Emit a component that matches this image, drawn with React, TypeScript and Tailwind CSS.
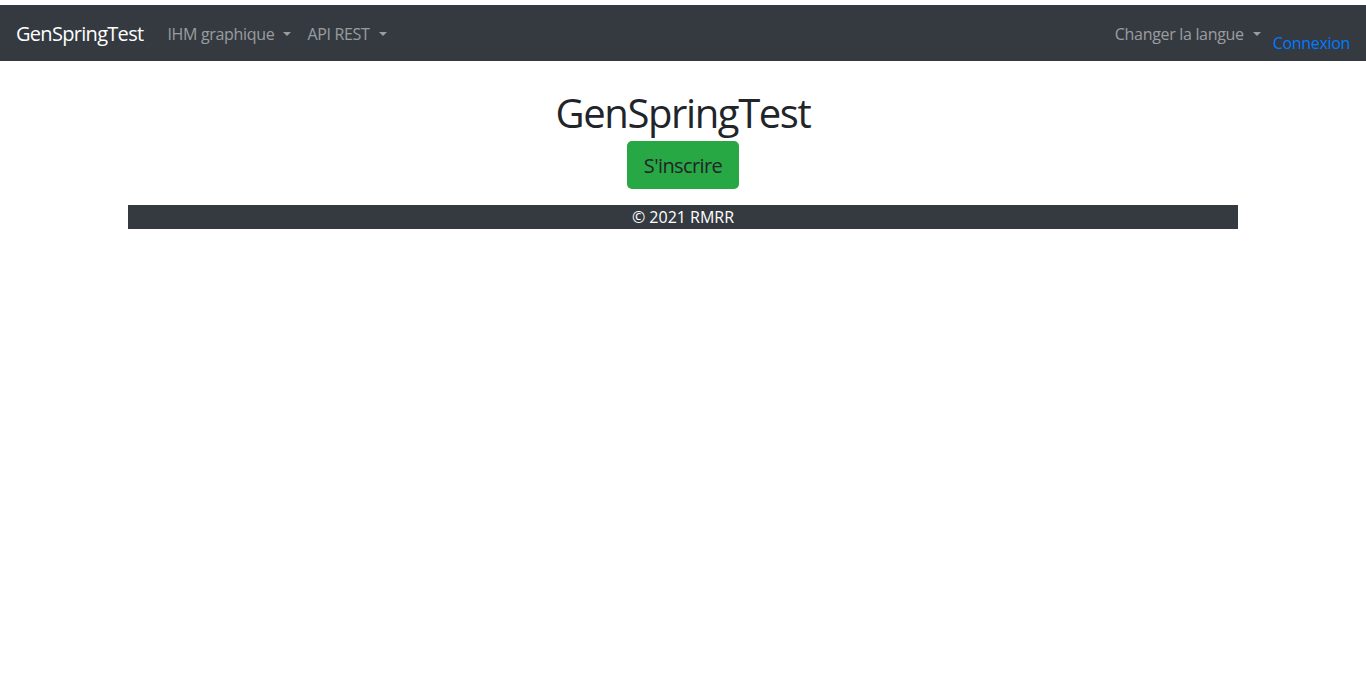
import { ReactNode } from "react";

function Caret() {
  return (
    <span className="ml-[9px] inline-block align-[4px] border-x-4 border-t-4 border-x-transparent border-t-current" />
  );
}

function NavLink({ children }: { children: ReactNode }) {
  return (
    <a href="#" className="px-2 pt-[9px] pb-[7px] leading-6 tracking-[-0.02em] text-[rgba(255,255,255,0.5)]">
      {children}
      <Caret />
    </a>
  );
}

export default function App() {
  return (
    <div className="min-h-screen bg-white pt-[5px] font-['Open_Sans',sans-serif] text-base text-[#212529]">
      <nav className="flex items-center justify-between bg-[#343a40] px-4 py-2">
        <div className="flex items-center">
          <a href="#" className="mr-4 pt-[6px] pb-[4px] text-xl leading-[30px] tracking-[-0.035em] text-white">
            GenSpringTest
          </a>
          <NavLink>IHM graphique</NavLink>
          <NavLink>API REST</NavLink>
        </div>
        <div className="flex items-center">
          <NavLink>Changer la langue</NavLink>
          <a href="#" className="ml-1 -mb-[2px] pt-[18px] leading-6 tracking-[-0.02em] text-[#007bff]">
            Connexion
          </a>
        </div>
      </nav>

      <main className="mx-auto w-[1110px]">
        <div className="flex flex-col items-center pt-7">
          <h1 className="text-[40px] leading-[48px] font-normal tracking-[-0.035em]">GenSpringTest</h1>
          <button className="mt-1 rounded-[5px] bg-[#28a745] px-[17px] pt-[10px] pb-[8px] text-xl leading-[30px] tracking-[-0.03em] text-[#212529]">
            S'inscrire
          </button>
        </div>
        <footer className="mt-4 bg-[#343a40] text-center leading-6 text-white">
          © 2021 RMRR
        </footer>
      </main>
    </div>
  );
}
